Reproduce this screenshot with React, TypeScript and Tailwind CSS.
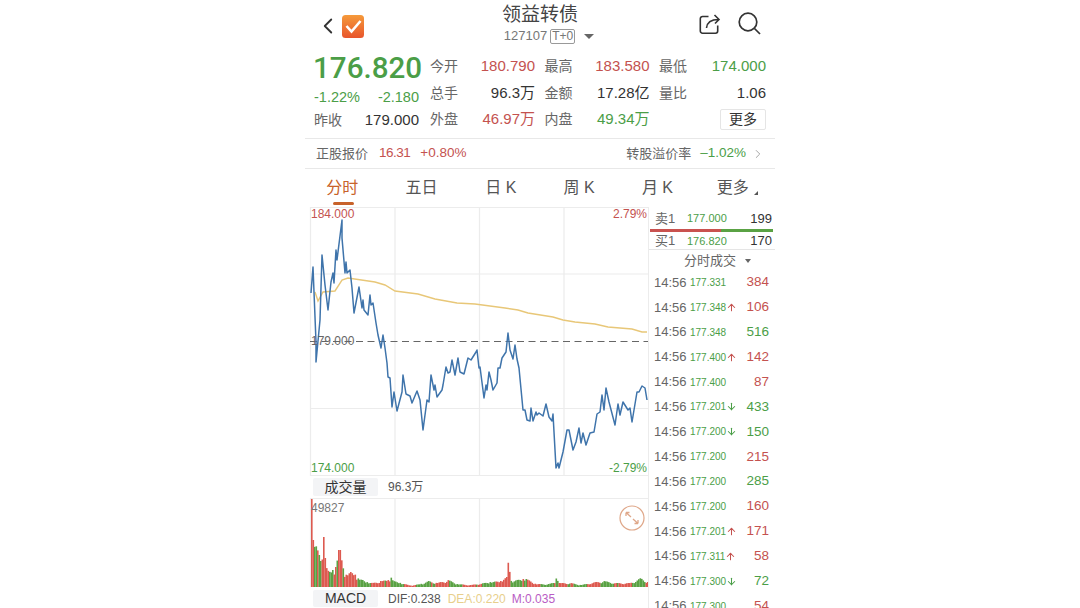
import { ChevronLeft, ChevronRight, ArrowUp, ArrowDown } from "lucide-react";

const RED = "text-[#c4524f]";
const GREEN = "text-[#4b9e47]";

const pricePoints =
  "311,293 313,267 316,342 316,362 320,320 322,255 325,285 328,310 331,282 333,273 334,283 336,250 337,260 342,220 342,238 345,273 346,262 347,273 350,270 352,288 354,313 359,287 362,308 363,300 364,310 368,315 370,295 371,305 373,303 376,323 378,335 381,348 383,335 385,348 387,363 388,377 390,378 392,407 394,392 397,411 402,392 403,375 406,394 410,396 412,403 417,391 420,400 423,430 427,400 429,402 431,375 434,390 435,385 437,397 442,390 443,385 446,367 448,373 450,372 452,360 455,375 458,358 460,372 464,374 468,358 471,360 476,352 477,350 479,368 480,367 484,398 486,385 487,390 489,372 491,380 493,390 497,383 498,368 500,368 502,358 506,352 508,333 510,350 513,359 515,345 517,359 519,368 523,410 525,410 527,420 530,421 531,408 533,421 536,412 537,415 539,413 543,416 546,404 549,417 552,421 553,414 556,468 558,463 559,468 563,452 567,430 569,430 573,450 576,442 579,428 581,443 583,433 586,445 590,433 594,432 597,414 600,412 602,395 604,410 606,388 609,402 615,425 618,404 620,415 623,402 628,410 630,408 632,422 637,392 639,392 642,386 645,388 647,400";

const avgPoints =
  "315,292 318,301 323,292 335,291 342,280 348,278 375,282 385,285 395,291 418,294 435,299 457,303 475,304 505,308 518,310 528,313 553,317 563,320 575,322 595,324 608,327 632,329 642,332 647,332";

// x, bar height: rough outline of the volume histogram
const volumeOutline: [number, number][] = [
  [311, 88], [312, 48], [315, 42], [318, 34], [320, 26], [322, 28], [323, 50], [325, 22], [328, 15],
  [332, 17], [335, 20], [338, 37], [340, 37], [342, 20], [345, 12], [350, 15], [354, 13], [358, 8],
  [362, 7], [366, 5], [372, 4], [380, 6], [388, 7], [390, 10], [393, 6], [400, 4], [410, 1.5],
  [420, 3], [428, 6], [436, 4], [448, 7], [456, 3], [470, 2], [490, 5], [500, 6], [506, 10],
  [508, 29], [510, 6], [522, 8], [526, 8], [535, 3], [548, 3], [555, 5], [556, 12], [558, 4],
  [570, 4], [580, 2], [595, 5], [603, 6], [615, 4], [630, 4], [640, 9], [647, 5],
];

const volumeHeight = (x: number) => {
  for (let i = 0; i < volumeOutline.length - 1; i++) {
    const [x0, h0] = volumeOutline[i];
    const [x1, h1] = volumeOutline[i + 1];
    if (x >= x0 && x <= x1) return h0 + ((h1 - h0) * (x - x0)) / (x1 - x0 || 1);
  }
  return 3;
};

const redAt = (x: number, i: number) => {
  if (x < 312 || (x >= 322.5 && x <= 324.5) || (x >= 337 && x <= 341) || (x >= 506.5 && x <= 509.5)) return true;
  if (x >= 555 && x <= 557) return false;
  if (x >= 313 && x <= 321) return i % 4 === 0;
  if (x >= 325 && x <= 336) return i % 5 < 2;
  // runs of the same colour further along
  return Math.sin(i * 0.31) + 0.6 * Math.sin(i * 1.13) > 0;
};

const bars = Array.from({ length: 225 }, (_, i) => {
  const x = 311 + i * 1.5;
  const noise = 0.65 + 0.35 * Math.abs(Math.sin(i * 12.9898));
  const sharp = volumeOutline.some(([px]) => Math.abs(px - x) < 1);
  return { x, h: volumeHeight(x) * (sharp ? 1 : noise), red: redAt(x, i) };
});

const trades: [string, "up" | "down" | "", string, boolean][] = [
  ["177.331", "", "384", true],
  ["177.348", "up", "106", true],
  ["177.348", "", "516", false],
  ["177.400", "up", "142", true],
  ["177.400", "", "87", true],
  ["177.201", "down", "433", false],
  ["177.200", "down", "150", false],
  ["177.200", "", "215", true],
  ["177.200", "", "285", false],
  ["177.200", "", "160", true],
  ["177.201", "up", "171", true],
  ["177.311", "up", "58", true],
  ["177.300", "down", "72", false],
  ["177.300", "", "54", true],
];

function Logo() {
  return (
    <svg width="22" height="23" viewBox="0 0 22 23" className="ml-[1px]">
      <defs>
        <linearGradient id="logo" x1="0" y1="0" x2="0" y2="1">
          <stop offset="0" stopColor="#f59a3a" />
          <stop offset="1" stopColor="#e8552c" />
        </linearGradient>
      </defs>
      <rect width="22" height="23" rx="3.5" fill="url(#logo)" />
      <path d="M4.5 11 L9.5 16.5 L18.5 6" fill="none" stroke="#fff" strokeWidth="2.6" />
    </svg>
  );
}

function Stat({ label, value, color }: { label: string; value: string; color: string }) {
  return (
    <div className="flex items-center justify-between">
      <span className="text-[14px] text-[#666]">{label}</span>
      <span className={color}>{value}</span>
    </div>
  );
}

function PriceChart() {
  return (
    <div className="relative h-[269px] w-[343px]">
      <svg width="343" height="269" viewBox="305 207 343 269" className="block">
        <g stroke="#ececec" strokeWidth="1.2" fill="none">
          <path d="M310.5 207V476M395 207V476M479.5 207V476M564 207V476" />
          <path d="M310 207.5H648M310 274H648M310 408.5H648M310 475.5H648" />
        </g>
        <path d="M310 341.5H648" stroke="#666" strokeWidth="1.2" strokeDasharray="7 4.5" />
        <polyline points={avgPoints} fill="none" stroke="#e8c778" strokeWidth="1.4" />
        <polyline points={pricePoints} fill="none" stroke="#3f74ab" strokeWidth="1.5" strokeLinejoin="round" />
      </svg>
      <span className={`absolute left-[6px] top-[0px] text-[12px] leading-[14px] ${RED}`}>184.000</span>
      <span className={`absolute right-[1px] top-[0px] text-[12px] leading-[14px] ${RED}`}>2.79%</span>
      <span className="absolute left-[6px] top-[127px] text-[12px] leading-[14px] text-[#666]">179.000</span>
      <span className={`absolute left-[6px] top-[254px] text-[12px] leading-[14px] ${GREEN}`}>174.000</span>
      <span className={`absolute right-[1px] top-[254px] text-[12px] leading-[14px] ${GREEN}`}>-2.79%</span>
    </div>
  );
}

function VolumeChart() {
  return (
    <div className="relative h-[89px] w-[343px]">
      <svg width="343" height="89" viewBox="305 498 343 89" className="block">
        <path d="M310.5 498V587M395 498V587M479.5 498V587M564 498V587" stroke="#ececec" strokeWidth="1.2" />
        <path d="M310 498.5H648" stroke="#ececec" />
        {bars.map((b) => (
          <rect
            key={b.x}
            x={b.x}
            y={587 - b.h}
            width="1.6"
            height={b.h}
            fill={b.red ? "#dd5a50" : "#5aa244"}
          />
        ))}
      </svg>
      <span className="absolute left-[6px] top-[3px] text-[12px] leading-[14px] text-[#777]">49827</span>
      <svg width="26" height="26" viewBox="0 0 26 26" className="absolute left-[314px] top-[7px]">
        <circle cx="13" cy="13" r="12" fill="#fff" stroke="#dfa789" strokeWidth="1.2" />
        <path
          d="M7 7.5L12 12M7 7.5V11M7 7.5H10.5M14 14L19 18.5M19 18.5V15M19 18.5H15.5"
          fill="none"
          stroke="#dfa789"
          strokeWidth="1.3"
        />
      </svg>
    </div>
  );
}

export default function App() {
  return (
    <div className="h-[608px] w-[1080px] overflow-hidden bg-white font-['Liberation_Sans','Noto_Sans_CJK_SC',sans-serif] text-[#333]">
      <div className="ml-[305px] w-[470px]">
        {/* title bar */}
        <div className="flex h-[50px] items-start">
          <div className="flex w-[70px] items-center pl-[10px] pt-[13px]">
            <ChevronLeft size={26} strokeWidth={1.7} className="text-[#333]" />
            <Logo />
          </div>
          <div className="flex flex-1 flex-col items-center pl-[11px] pt-[3px]">
            <span className="text-[19px] leading-[24px] text-[#444]">领益转债</span>
            <div className="ml-[18px] flex items-center text-[13px] leading-[18px] text-[#777]">
              <span>127107</span>
              <span className="ml-[3px] rounded-[2px] border border-[#999] px-[1px] text-[12px] leading-[13px]">T+0</span>
              <span className="ml-[9px] h-0 w-0 border-x-[5px] border-t-[5px] border-x-transparent border-t-[#666]" />
            </div>
          </div>
          <div className="flex w-[81px] items-start gap-[17px] pl-[5px] pt-[13px]">
            <svg width="22" height="22" viewBox="0 0 22 22" fill="none" stroke="#333" strokeWidth="1.6">
              <path d="M9.5 3.5H3.5A2.2 2.2 0 0 0 1.3 5.7V18A2.2 2.2 0 0 0 3.5 20.2H16.5A2.2 2.2 0 0 0 18.7 18V12.5" />
              <path d="M7.5 15C8 9.5 11 6.5 19.5 6.5M15.5 2L20 6.5L16 10.5" />
            </svg>
            <svg width="23" height="23" viewBox="0 0 23 23" fill="none" stroke="#333" strokeWidth="1.7" className="-mt-[1px]">
              <circle cx="10" cy="10" r="8.8" />
              <path d="M16.5 16.5L22 22" />
            </svg>
          </div>
        </div>

        {/* quote */}
        <div className="flex h-[88px] text-[15px] leading-[26px]">
          <div className="ml-[9px] w-[105px]">
            <div className={`-ml-[1px] h-[36px] whitespace-nowrap font-['Roboto'] text-[29.6px] font-medium leading-[36px] ${GREEN}`}>176.820</div>
            <div className={`-mt-[1px] flex justify-between text-[14.5px] leading-[24px] ${GREEN}`}>
              <span>-1.22%</span>
              <span>-2.180</span>
            </div>
            <div className="flex items-center justify-between leading-[22px]">
              <span className="text-[14px] text-[#666]">昨收</span>
              <span>179.000</span>
            </div>
          </div>
          <div className="ml-[11px] grid h-[82px] w-[336px] auto-rows-[26.5px] grid-cols-[105px_105px_107px] gap-x-[9.5px] pt-[3px]">
            <Stat label="今开" value="180.790" color={RED} />
            <Stat label="最高" value="183.580" color={RED} />
            <Stat label="最低" value="174.000" color={GREEN} />
            <Stat label="总手" value="96.3万" color="text-[#333]" />
            <Stat label="金额" value="17.28亿" color="text-[#333]" />
            <Stat label="量比" value="1.06" color="text-[#333]" />
            <Stat label="外盘" value="46.97万" color={RED} />
            <Stat label="内盘" value="49.34万" color={GREEN} />
            <div className="flex items-center justify-end">
              <span className="rounded-[2px] border border-[#e5e5e5] px-[8px] text-[14px] leading-[19px]">更多</span>
            </div>
          </div>
        </div>

        {/* underlying stock */}
        <div className="flex h-[31px] items-center justify-between border-y border-[#e8e8e8] pl-[11px] pr-[10.5px] text-[13.5px]">
          <div className="flex items-center">
            <span className="text-[13px] text-[#666]">正股报价</span>
            <span className={`ml-[11px] tracking-[-0.5px] ${RED}`}>16.31</span>
            <span className={`ml-[10px] ${RED}`}>+0.80%</span>
          </div>
          <div className="flex items-center">
            <span className="text-[13px] text-[#666]">转股溢价率</span>
            <span className={`ml-[9px] ${GREEN}`}>–1.02%</span>
            <ChevronRight size={14} strokeWidth={1.5} className="ml-[4.5px] text-[#999]" />
          </div>
        </div>

        {/* tabs */}
        <div className="grid h-[38px] grid-cols-6 text-[16px] text-[#555]">
          <div className="relative flex items-center justify-center pr-[4px] text-[#c8622a]">
            分时
            <span className="absolute bottom-[2px] left-[28px] h-[3px] w-[21px] rounded-full bg-[#c8622a]" />
          </div>
          <div className="flex items-center justify-center pr-[2px]">五日</div>
          <div className="flex items-center justify-center">日 K</div>
          <div className="flex items-center justify-center">周 K</div>
          <div className="flex items-center justify-center">月 K</div>
          <div className="relative flex items-center justify-center pr-[6px]">
            更多
            <span className="absolute bottom-[12px] right-[17px] h-0 w-0 border-b-[4px] border-l-[4px] border-b-[#555] border-l-transparent" />
          </div>
        </div>

        {/* chart + trade list */}
        <div className="flex">
          <div className="w-[343px] shrink-0">
            <PriceChart />
            <div className="flex h-[22px] items-center pl-[8px]">
              <span className="w-[65px] rounded-[2px] bg-[#f3f4f6] text-center text-[14px] leading-[18px]">成交量</span>
              <span className="ml-[10px] text-[12px] text-[#555]">96.3万</span>
            </div>
            <VolumeChart />
            <div className="flex h-[21px] items-center pl-[8px] pt-[2px] text-[12px]">
              <span className="w-[65px] rounded-[2px] bg-[#f3f4f6] text-center text-[14px] leading-[17px]">MACD</span>
              <span className="ml-[10px] text-[#555]">DIF:0.238</span>
              <span className="ml-[7px] text-[#e8cf8c]">DEA:0.220</span>
              <span className="ml-[6px] text-[#b95cc4]">M:0.035</span>
            </div>
          </div>

          <div className="w-[127px] border-l border-[#ececec]">
            <div className="flex h-[22px] items-center pl-[6px] pr-[3px] pt-[1px]">
              <span className="w-[32px] text-[13px] text-[#666]">卖1</span>
              <span className={`text-[11px] ${GREEN}`}>177.000</span>
              <span className="ml-auto text-[13px]">199</span>
            </div>
            <div className="ml-[1px] flex h-[3px] w-[123px]">
              <span className="w-[71px] bg-[#c9524f]" />
              <span className="flex-1 bg-[#5aa244]" />
            </div>
            <div className="flex h-[18px] items-center border-b border-[#e5e5e5] pl-[6px] pr-[3px] pt-[1px]">
              <span className="w-[32px] text-[13px] text-[#666]">买1</span>
              <span className={`text-[11px] ${GREEN}`}>176.820</span>
              <span className="ml-auto text-[13px]">170</span>
            </div>
            <div className="flex h-[19px] items-center pl-[35px] pt-[2px] text-[13px] text-[#666]">
              分时成交
              <span className="ml-[9px] h-0 w-0 border-x-[3.5px] border-t-[4px] border-x-transparent border-t-[#666]" />
            </div>
            <div className="flex flex-col pt-[1px]">
              {trades.map(([price, dir, qty, up], i) => (
                <div key={i} className="flex h-[24.9px] shrink-0 items-center pl-[5px] pr-[6px] text-[13px]">
                  <span className="w-[34px] text-[#666]">14:56</span>
                  <span className={`ml-[2px] text-[10px] ${GREEN}`}>{price}</span>
                  {dir === "up" && <ArrowUp size={11} strokeWidth={2.2} className="text-[#c4524f]" />}
                  {dir === "down" && <ArrowDown size={11} strokeWidth={2.2} className="text-[#4b9e47]" />}
                  <span className={`ml-auto text-[13.5px] ${up ? RED : GREEN}`}>{qty}</span>
                </div>
              ))}
            </div>
          </div>
        </div>
      </div>
    </div>
  );
}
